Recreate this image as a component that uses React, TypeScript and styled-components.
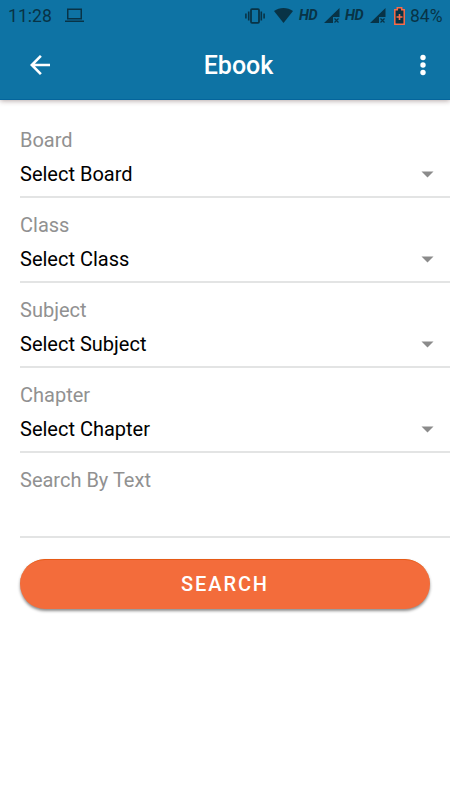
import React from "react";
import styled, { createGlobalStyle } from "styled-components";

const INK = "#083346";

const GlobalStyle = createGlobalStyle`
  * { box-sizing: border-box; }
  body {
    margin: 0;
    background: #ffffff;
    font-family: Roboto, "Liberation Sans", sans-serif;
  }
`;

const Screen = styled.div`
  width: 450px;
  height: 800px;
  overflow: hidden;
  background: #ffffff;
`;

const Header = styled.header`
  height: 100px;
  background: #0e73a4;
  border-bottom: 1px solid #04659c;
  box-shadow: 0 1px 5px rgba(60, 30, 30, 0.38);
`;

const StatusBar = styled.div`
  height: 31px;
  display: flex;
  align-items: center;
  color: ${INK};
  padding-left: 8px;
`;

const Clock = styled.span`
  width: 57px;
  font-size: 17.6px;
  line-height: 30px;
`;

const StatusIcons = styled.div`
  display: flex;
  align-items: center;
  margin-left: 161px;
`;

const Glyph = styled.svg<{ $before?: number }>`
  display: block;
  flex: none;
  margin-left: ${(p) => p.$before ?? 0}px;
`;

const NetworkTag = styled.span<{ $before: number }>`
  width: 18px;
  margin-left: ${(p) => p.$before}px;
  font-size: 14.5px;
  line-height: 30px;
  font-weight: 700;
  font-style: italic;
  letter-spacing: -0.4px;
`;

const BatteryLevel = styled.span`
  margin-left: 5px;
  font-size: 17.5px;
  line-height: 30px;
`;

const AppBar = styled.div`
  height: 68px;
  display: grid;
  grid-template-columns: 77px 1fr 77px;
  align-items: center;
`;

const IconButton = styled.button<{ $end?: boolean }>`
  display: flex;
  justify-content: ${(p) => (p.$end ? "flex-end" : "flex-start")};
  padding: ${(p) => (p.$end ? "0 24.5px 0 0" : "0 0 0 30px")};
  border: 0;
  background: none;
`;

const Title = styled.h1`
  margin: 0;
  padding: 2px 0 0 27px;
  color: #ffffff;
  font-size: 25px;
  line-height: 30px;
  font-weight: 500;
  text-align: center;
`;

const Form = styled.main`
  padding-top: 13px;
`;

const Field = styled.div`
  height: 85px;
  margin-left: 20px;
  padding-top: 14px;
  border-bottom: 2px solid #e3e4e4;
  font-size: 20px;
`;

const Label = styled.div`
  height: 34px;
  line-height: 27px;
  color: #919191;
`;

const Value = styled.div`
  display: flex;
  justify-content: space-between;
  line-height: 27px;
  color: #000000;
  padding-right: 16px;
`;

const Caret = styled.svg`
  margin-top: 10px;
`;

const SearchButton = styled.button`
  display: block;
  width: 410px;
  height: 50px;
  margin: 21px 20px 0;
  padding: 0;
  border: 0;
  border-top: 1px solid #e65a16;
  border-radius: 25px;
  background: #f36c3b;
  box-shadow: 0 2px 3px rgba(0, 0, 0, 0.45);
  color: #ffffff;
  font: 500 20px/49px Roboto, "Liberation Sans", sans-serif;
  letter-spacing: 1.9px;
`;

const SignalIcon = ({ before }: { before: number }) => (
  <Glyph $before={before} width="16" height="16" viewBox="0 0 16 16" fill={INK}>
    <path d="M0 15 15.5 0V9H9V15Z" />
    <path d="m10.5 10.5 4 4m0-4-4 4" stroke={INK} strokeWidth="1.2" />
  </Glyph>
);

const selects = ["Board", "Class", "Subject", "Chapter"];

export default function App() {
  return (
    <Screen>
      <GlobalStyle />
      <Header>
        <StatusBar>
          <Clock>11:28</Clock>
          <Glyph width="19" height="15" viewBox="0 0 19 15" fill="none" stroke={INK}>
            <path d="M2.75 1.25h13.5v9.5H2.75z" strokeWidth="1.5" />
            <path d="M0 13.25h19" strokeWidth="1.5" />
          </Glyph>
          <StatusIcons>
            <Glyph width="20" height="16" viewBox="0 0 20 16" fill="none" stroke={INK}>
              <rect x="6" y="1.2" width="8" height="13.6" rx="1" strokeWidth="1.8" />
              <path d="M3.7 3.5v9M16.3 3.5v9M.9 5.5v5M19.1 5.5v5" strokeWidth="1.6" />
            </Glyph>
            <Glyph $before={9} width="19" height="15" viewBox="0 0 19 15" fill={INK}>
              <path d="M0 3C5.5-1 13.5-1 19 3L9.5 15Z" />
            </Glyph>
            <NetworkTag $before={6}>HD</NetworkTag>
            <SignalIcon before={7} />
            <NetworkTag $before={5}>HD</NetworkTag>
            <SignalIcon before={7} />
            <Glyph $before={8} width="11" height="18" viewBox="0 0 11 18">
              <path d="M.8 2.8H3.3V.8H7.7V2.8H10.2V17.2H.8Z" fill={INK} stroke="#fa6b49" strokeWidth="1.5" />
              <path d="M5.5 7v6M2.5 10h6" stroke="#fa6b49" strokeWidth="1.6" />
            </Glyph>
            <BatteryLevel>84%</BatteryLevel>
          </StatusIcons>
        </StatusBar>
        <AppBar>
          <IconButton aria-label="Back">
            <Glyph width="20" height="20" viewBox="0 0 20 20" fill="none" stroke="#ffffff" strokeWidth="2.6">
              <path d="M20 10H2M10.9.9 1.8 10l9.1 9.1" />
            </Glyph>
          </IconButton>
          <Title>Ebook</Title>
          <IconButton $end aria-label="More options">
            <Glyph width="6" height="22" viewBox="0 0 6 22" fill="#ffffff">
              <circle cx="3" cy="3.5" r="2.7" />
              <circle cx="3" cy="11" r="2.7" />
              <circle cx="3" cy="18.5" r="2.7" />
            </Glyph>
          </IconButton>
        </AppBar>
      </Header>
      <Form>
        {selects.map((name) => (
          <Field key={name}>
            <Label>{name}</Label>
            <Value>
              Select {name}
              <Caret width="13" height="7" viewBox="0 0 13 7" fill="#8b8b8b">
                <path d="M.5.5h12L6.5 6.5Z" />
              </Caret>
            </Value>
          </Field>
        ))}
        <Field>
          <Label>Search By Text</Label>
        </Field>
        <SearchButton>SEARCH</SearchButton>
      </Form>
    </Screen>
  );
}
